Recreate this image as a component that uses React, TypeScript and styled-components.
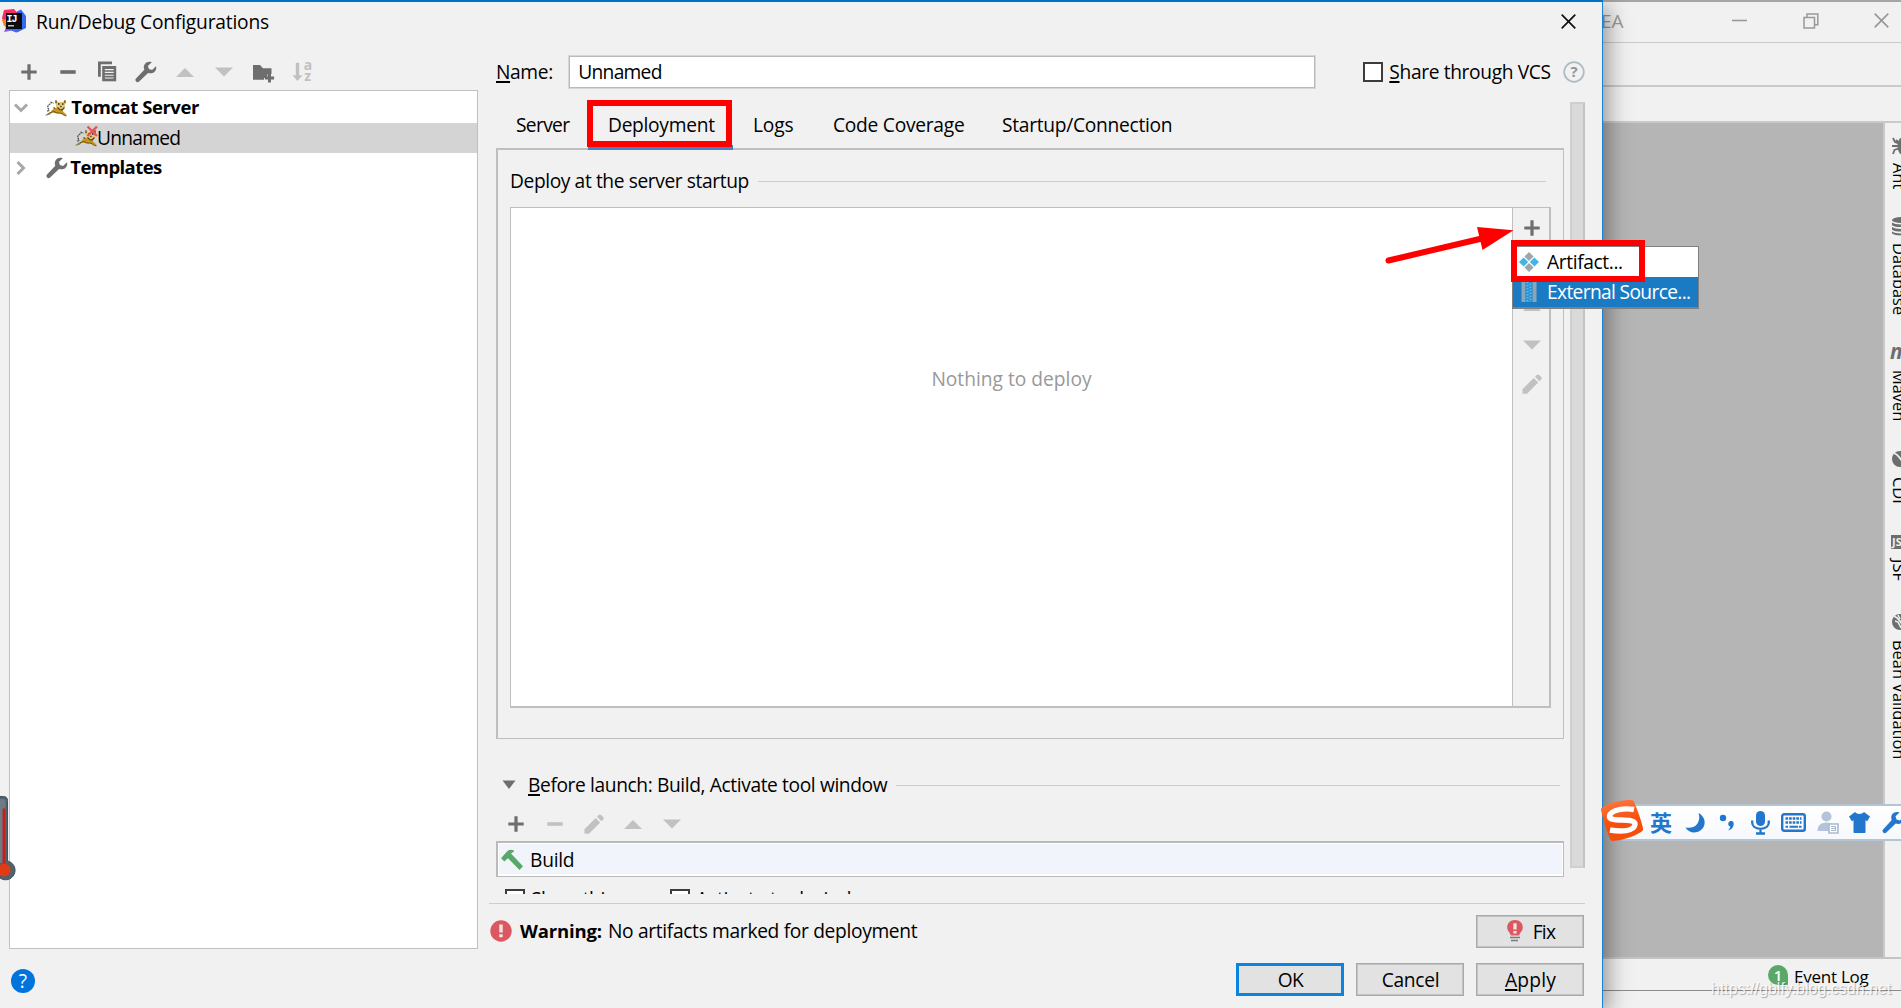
import React from "react";
import styled, { createGlobalStyle, css } from "styled-components";

const GlobalStyle = createGlobalStyle`
  html, body { margin: 0; padding: 0; overflow: hidden; }
  *, *::before, *::after { box-sizing: border-box; }
  svg { display: block; flex: none; overflow: visible; }
  body { font-family: "Open Sans", "Noto Sans", sans-serif; font-size: 19.2px; color: #000; }
`;

const line = "#c0c0c0";
const iconGrey = "#6e6e6e";
const iconOff = "#c1c1c1";

/* ---------- text ---------- */

const Label = styled.span<{ $ls?: number; $bold?: boolean; $color?: string; $up?: number }>`
  flex: none;
  white-space: nowrap;
  line-height: 24px;
  font-size: ${(p) => (p.$bold ? 18.5 : 19.2)}px;
  font-weight: ${(p) => (p.$bold ? 700 : 400)};
  letter-spacing: ${(p) => p.$ls ?? 0}px;
  color: ${(p) => p.$color ?? "#000"};
  padding-bottom: ${(p) => p.$up ?? 0}px;
`;

const Mnemonic = styled.span`
  text-decoration: underline;
  text-decoration-thickness: 2px;
  text-underline-offset: 2px;
  text-decoration-skip-ink: none;
`;

/* ---------- frame ---------- */

const Desktop = styled.div`
  position: relative;
  display: flex;
  width: 1901px;
  height: 1008px;
  overflow: hidden;
  background: #f1f1f1;
`;

const Dialog = styled.section`
  position: relative;
  z-index: 1;
  flex: none;
  display: flex;
  flex-direction: column;
  width: 1603px;
  height: 1008px;
  background: #f1f1f1;
  border-top: 2px solid #0072c9;
  border-right: 1px solid #1a80d2;
  box-shadow: 4px 6px 22px rgba(0, 0, 0, 0.42);
`;

const TitleBar = styled.header`
  display: flex;
  align-items: center;
  height: 40px;
  padding: 0 26px 2px 2px;
`;

const TitleText = styled.div`
  flex: 1;
  padding-left: 10px;
`;

const Body = styled.div`
  display: flex;
  height: 907px;
`;

/* ---------- left side ---------- */

const Sidebar = styled.aside`
  display: flex;
  flex-direction: column;
  width: 478px;
  padding-left: 9px;
`;

const ToolStrip = styled.div<{ $h: number; $top: number; $left: number }>`
  display: flex;
  flex: none;
  align-items: center;
  gap: 15px;
  height: ${(p) => p.$h}px;
  padding: ${(p) => `${p.$top}px 0 0 ${p.$left}px`};
`;

const Tree = styled.div`
  flex: 1;
  background: #fff;
  border: 1px solid ${line};
  padding-top: 2px;
`;

const TreeRow = styled.div<{ $selected?: boolean; $indent: number }>`
  display: flex;
  align-items: center;
  height: 30px;
  padding-left: ${(p) => p.$indent}px;
  background: ${(p) => (p.$selected ? "#d4d4d4" : "transparent")};
`;

const Twisty = styled.span`
  display: flex;
  width: 32px;
`;

/* ---------- right side ---------- */

const Editor = styled.main`
  display: flex;
  flex-direction: column;
  width: 1096px;
  margin-left: 11px;
`;

const NameRow = styled.div`
  display: flex;
  flex: none;
  align-items: center;
  height: 60px;
  padding-left: 7px;
`;

const TextField = styled.div`
  display: flex;
  align-items: center;
  width: 748px;
  height: 34px;
  margin: 0 47px 0 15.5px;
  padding: 0 0 1px 9px;
  background: #fff;
  border: 1px solid #d6d6d6;
  box-shadow: inset 0 0 0 1px #bababa;
`;

const CheckBox = styled.span`
  flex: none;
  width: 20px;
  height: 20px;
  margin-right: 6px;
  background: #fff;
  border: 2px solid #3c3c3c;
`;

const ScrollPane = styled.div`
  display: flex;
  flex: none;
  height: 792px;
  padding-left: 7px;
  overflow: hidden;
`;

const ScrollContent = styled.div`
  width: 1068px;
`;

const ScrollThumb = styled.div`
  width: 15px;
  height: 766px;
  margin-left: 6px;
  background: #d9d9d9;
  border: 2px solid #cfcfcf;
  border-right-color: #c4c4c4;
`;

const TabBar = styled.nav`
  display: flex;
  height: 46px;
`;

const Tab = styled.div<{ $w: number; $active?: boolean }>`
  position: relative;
  display: flex;
  align-items: center;
  width: ${(p) => p.$w}px;
  padding: 0 0 1px 20px;
  ${(p) =>
    p.$active &&
    css`
      &::after {
        content: "";
        position: absolute;
        left: 0;
        right: 0;
        bottom: -2px;
        height: 5px;
        background: #4083c9;
      }
    `}
`;

const TabPanel = styled.div`
  height: 591px;
  padding: 5px 12px 0;
  border: solid #bfbfbf;
  border-width: 2px 1px 1px 2px;
`;

const GroupTitle = styled.div`
  display: flex;
  align-items: center;
  height: 52px;
  padding: 0 5px 0 0;
`;

const Rule = styled.i`
  flex: 1;
  height: 1px;
  margin-left: 9px;
  background: #cdcdcd;
`;

const DeployList = styled.div`
  display: flex;
  width: 1041px;
  height: 501px;
  border: solid #bfbfbf;
  border-width: 1px 2px 2px 1px;
`;

const EmptyArea = styled.div`
  flex: 1;
  padding-top: 157px;
  text-align: center;
  background: #fff;
`;

const SideTools = styled.div`
  display: flex;
  flex-direction: column;
  align-items: center;
  gap: 15px;
  width: 37px;
  padding: 8px 0 0 1px;
  border-left: 1px solid #bfbfbf;
`;

const LaunchTitle = styled.div`
  display: flex;
  align-items: center;
  height: 63px;
  padding: 29px 4px 0 6px;
`;

const TaskList = styled.div`
  height: 36px;
  background: #fff;
  border: solid #bababa;
  border-width: 2px 1px 1px 2px;
  padding: 1px 1px 2px;
`;

const TaskRow = styled.div`
  display: flex;
  align-items: center;
  gap: 6px;
  height: 30px;
  padding: 1px 0 0 1px;
  background: #f1f5fb;
`;

const OptionRow = styled.div`
  display: flex;
  padding: 12px 0 0 9px;
  height: 40px;
`;

const Option = styled.div`
  display: flex;
  align-items: center;
  height: 20px;
  width: 165px;
`;

const WarningRow = styled.div`
  display: flex;
  align-items: center;
  height: 46px;
  margin-top: 9px;
  padding: 10px 1px 0 1px;
  border-top: 1px solid #cdcdcd;
`;

const WarningText = styled.div`
  display: flex;
  flex: 1;
  gap: 6px;
  padding: 0 0 1px 8px;
`;

const Button = styled.button<{ $primary?: boolean }>`
  display: flex;
  flex: none;
  align-items: center;
  justify-content: center;
  gap: 9px;
  width: 108px;
  height: 33px;
  padding: 0 0 0 1px;
  font-family: inherit;
  background: #e2e2e2;
  border: ${(p) => (p.$primary ? "3px solid #0a84e0" : "1px solid #a9a9a9")};
  box-shadow: ${(p) => (p.$primary ? "none" : "inset 0 0 0 1px #c2c2c2")};
`;

const Footer = styled.footer`
  display: flex;
  align-items: center;
  gap: 12px;
  height: 59px;
  padding: 2px 18px 0 11px;
`;

const HelpButton = styled.span`
  display: flex;
  align-items: center;
  justify-content: center;
  width: 24px;
  height: 24px;
  margin: 2px auto 0 0;
  border-radius: 50%;
  background: #0074dd;
`;

/* ---------- IDE window behind ---------- */

const Ide = styled.section`
  display: flex;
  flex: 1;
  flex-direction: column;
  border-top: 2px solid #a5a5a5;
`;

const IdeTitle = styled.div`
  display: flex;
  align-items: center;
  height: 41px;
  overflow: hidden;
  border-bottom: 1px solid #c9c9c9;
`;

const AppName = styled.span`
  width: 129px;
  margin-left: -2px;
  padding-bottom: 3px;
  font-size: 19px;
  color: #9a9a9a;
`;

const WindowButtons = styled.div`
  display: flex;
  justify-content: space-between;
  width: 157px;
  padding-bottom: 2px;
  margin-left: 2px;
`;

const IdeBar = styled.div<{ $h: number }>`
  height: ${(p) => p.$h}px;
  border-bottom: 2px solid #c9c9c9;
`;

const IdeMain = styled.div`
  display: flex;
  height: 836px;
  border-bottom: 2px solid #c4c4c4;
`;

const Canvas = styled.div`
  width: 280px;
  background: #b5b5b5;
`;

const Rail = styled.div`
  width: 18px;
  padding: 12.5px 0 0 0;
  border-left: 2px solid #c9c9c9;
  overflow: hidden;
`;

const RailItem = styled.div<{ $h: number; $gap: number }>`
  display: flex;
  flex-direction: column;
  gap: ${(p) => p.$gap}px;
  width: 30px;
  height: ${(p) => p.$h}px;
  padding-left: 2px;
`;

const RailIcon = styled.span`
  display: flex;
  align-items: center;
  height: 20px;
  padding-left: 5px;
`;

const RailText = styled.span`
  writing-mode: vertical-rl;
  width: 24px;
  line-height: 24px;
  font-size: 16.4px;
  white-space: nowrap;
`;

const MavenMark = styled.b`
  margin-left: -2px;
  font-size: 21px;
  line-height: 20px;
  font-style: italic;
  color: ${iconGrey};
  padding-bottom: 4px;
`;

const JsMark = styled.b`
  width: 22px;
  height: 14px;
  margin-left: -1px;
  padding-left: 1px;
  font-size: 11px;
  line-height: 14px;
  color: #f1f1f1;
  background: ${iconGrey};
`;

const StatusBar = styled.div`
  display: flex;
  align-items: center;
  gap: 6px;
  height: 32px;
  padding-left: 165px;
  border-bottom: 1px solid #8c8c8c;
`;

const EventLabel = styled.span`
  font-size: 17px;
  letter-spacing: -0.25px;
  padding-top: 3px;
  white-space: nowrap;
`;

const Badge = styled.span`
  display: flex;
  align-items: center;
  justify-content: center;
  width: 20px;
  height: 20px;
  margin-top: 1px;
  font-size: 15px;
  font-weight: 600;
  line-height: 20px;
  color: #fff;
  background: #59a869;
  border-radius: 10px 10px 1px 10px;
`;

/* ---------- floating layers ---------- */

const PopupMenu = styled.div`
  position: absolute;
  z-index: 2;
  left: 1512px;
  top: 246px;
  width: 187px;
  background: #fff;
  border: 1px solid #808080;
  border-bottom-width: 2px;
`;

const MenuItem = styled.div<{ $selected?: boolean }>`
  display: flex;
  align-items: center;
  gap: 8px;
  height: 30px;
  padding-left: 6px;
  color: ${(p) => (p.$selected ? "#fff" : "#000")};
  background: ${(p) => (p.$selected ? "#1a7bc4" : "#fff")};
`;

const Highlight = styled.div<{ $x: number; $y: number; $w: number; $h: number }>`
  position: absolute;
  z-index: 3;
  left: ${(p) => p.$x}px;
  top: ${(p) => p.$y}px;
  width: ${(p) => p.$w}px;
  height: ${(p) => p.$h}px;
  border: 6px solid #fe0000;
`;

const Arrow = styled.svg`
  position: absolute;
  z-index: 3;
  left: 1380px;
  top: 220px;
`;

const Thermometer = styled.svg`
  position: absolute;
  z-index: 3;
  left: 0;
  top: 794px;
`;

const ImeBar = styled.div`
  position: absolute;
  z-index: 3;
  left: 1600px;
  top: 804px;
  width: 320px;
  height: 37px;
  padding-left: 50px;
  display: flex;
  align-items: center;
`;

const ImeBack = styled.div`
  position: absolute;
  left: 22px;
  right: 0;
  top: 0;
  bottom: 0;
  background: linear-gradient(#fff, #f6f8fc);
  border: solid #b3c4d4;
  border-width: 2px 0;
`;

const ImeLogo = styled.svg`
  position: absolute;
  left: 0;
  top: -5px;
`;

const ImeSlot = styled.span<{ $w: number }>`
  position: relative;
  display: flex;
  flex: none;
  width: ${(p) => p.$w}px;
`;

const ImeMode = styled.span`
  font-family: "Noto Sans CJK SC", sans-serif;
  font-size: 22px;
  font-weight: 700;
  line-height: 30px;
  padding-bottom: 3px;
  color: #2277cc;
`;

const Watermark = styled.span`
  position: absolute;
  z-index: 4;
  left: 1711px;
  top: 979px;
  font-family: "Liberation Sans", sans-serif;
  font-size: 16px;
  line-height: 20px;
  color: rgba(255, 255, 255, 0.85);
  text-shadow: 1px 1px 1px rgba(0, 0, 0, 0.3);
`;

/* ---------- icons ---------- */

const Plus = () => (
  <svg width="24" height="24">
    <path d="M12 4.3v15.4M4.3 12h15.4" stroke={iconGrey} strokeWidth="3.2" fill="none" />
  </svg>
);

const Minus = ({ color = iconGrey }: { color?: string }) => (
  <svg width="24" height="24">
    <path d="M4.3 12h15.4" stroke={color} strokeWidth="3.6" fill="none" />
  </svg>
);

const Up = () => (
  <svg width="24" height="24">
    <path d="M3 17L12 8l9 9z" fill={iconOff} />
  </svg>
);

const Down = () => (
  <svg width="24" height="24">
    <path d="M3 7.5h18l-9 9z" fill={iconOff} />
  </svg>
);

const Copy = () => (
  <svg width="24" height="24">
    <path d="M3 1.5h14v2.7H5.8v12.6H3z" fill={iconGrey} />
    <path d="M7.2 6h14v15.3h-14z" fill={iconGrey} />
    <path d="M9.8 9.6h8.8M9.8 12.4h8.8M9.8 15.2h8.8M9.8 18h8.8" stroke="#f1f1f1" strokeWidth="1.1" />
  </svg>
);

const Wrench = ({ color = iconGrey, size = 24 }: { color?: string; size?: number }) => (
  <svg width={size} height={size} viewBox="0 0 24 24">
    <path
      d="M22 6.300l-3.900 3.700-3.200-.9-1-3.100 3.900-3.700c-2.700-1-5.400-.3-6.900 1.600-1.300 1.700-1.400 3.700-.6 5.800L2 18.600c-.9 1-.7 2.200.1 3 .9.9 2 .9 3 0l9-8.700c2.100.8 4.400.5 6.200-1 1.800-1.500 2.400-3.500 1.700-5.600z"
      fill={color}
    />
  </svg>
);

const FolderAdd = () => (
  <svg width="24" height="24">
    <path d="M2 5h7l3 3.200h8.500v5.800h-4v4H13v1.800H2z" fill={iconGrey} />
    <path d="M18.500 13.300v9.200M13.900 17.900h9.200" stroke={iconGrey} strokeWidth="3" />
  </svg>
);

const SortText = styled.text`
  font-family: "Open Sans", sans-serif;
  font-size: 14px;
  font-weight: 700;
  fill: ${iconOff};
`;

const Sort = () => (
  <svg width="24" height="24">
    <path d="M5.800 2.800h3.400v12.500h3.300L7.500 21 2.500 15.300h3.300z" fill={iconOff} />
    <SortText x="13.700" y="10">a</SortText>
    <SortText x="14.200" y="20.500">z</SortText>
  </svg>
);

const Pencil = () => (
  <svg width="24" height="24">
    <path d="M2.500 17.200L13.700 6l4.500 4.500L7 21.700H2.500z" fill={iconOff} />
    <path d="M15 4.700l1.700-1.700c.8-.8 1.600-.8 2.400 0l2.100 2.100c.8.8.8 1.600 0 2.400l-1.700 1.700z" fill={iconOff} />
  </svg>
);

const Cat = ({ broken = false }: { broken?: boolean }) => (
  <svg width="22" height="18" viewBox="0 0 22 18">
    <path d="M5.500 12.500L9 9.500l4-1.500 4 2.500 1.500 2.500 3 2.500-1 1.200-5-2.700-5 .3-2.500-.8z" fill="#c9971c" />
    <path d="M0 16.500l4-3 3-.5-2 2.500-3.500 1z" fill="#8c7a4a" />
    <path d="M5 13.800l4-1.300 3 1.500 4 .2 3.500 2.300 2 .3" stroke="#6b5410" strokeWidth="1" fill="none" />
    <path d="M4 10.500C1.500 8.500 3 5 6.500 4.500M5.500 3l3 1.200M2 12l3-.5M8.500 8.500l1.500 1" stroke="#3a3a3a" strokeWidth="1.100" fill="none" strokeDasharray="2 0.700" />
    <path d="M10.500 1l2.500 2h4.500L20.300.8l-.3 7-3 3.400-3.500-.5-2.500-3z" fill="#e9c873" />
    <path d="M11 1.200v3M20 1.200v3M12.500 8.500l2 2 2.500.5 2.500-2.500" stroke="#4a3c14" strokeWidth="1.200" fill="none" />
    <path d="M13 5h1.500M17 5h1.500M15.300 7.500h1.200" stroke="#222" strokeWidth="1.500" />
    {broken && <path d="M12.500-2.500l9.500 9.500M22-2.500L12.500 7" stroke="#e0565f" strokeWidth="2.400" />}
  </svg>
);

const LogoText = styled.text`
  font-family: "Liberation Mono", monospace;
  font-size: 10px;
  font-weight: 700;
  fill: #fff;
`;

const IdeaLogo = () => (
  <svg width="24" height="24" viewBox="0 0 24 24">
    <defs>
      <linearGradient id="ij" x1="0" x2="1">
        <stop offset="0" stopColor="#b14be8" />
        <stop offset="0.600" stopColor="#3b6cf2" />
      </linearGradient>
    </defs>
    <path d="M14 3l5-2.500L24 7v12l-9 4.500-6-2z" fill="#3668ec" />
    <path d="M2 1l10-1 4 5-6 14H4L0 9z" fill="#fb2b63" />
    <path d="M0 11l5-1v8l-3-1z" fill="#fc801d" />
    <path d="M2 23l3-7 12 3-3 4.500-4-2z" fill="url(#ij)" />
    <path d="M4 4h16v16H4z" fill="#0c0c10" />
    <LogoText x="4.500" y="12.500" textLength="11">IJ</LogoText>
    <path d="M6 16.800h6" stroke="#ddd" strokeWidth="1.300" />
  </svg>
);

const Cross = ({ color, size }: { color: string; size: number }) => (
  <svg width={size} height={size} viewBox="0 0 15 15">
    <path d="M.7.700l13.600 13.600M14.300.7L.7 14.300" stroke={color} strokeWidth="1.700" />
  </svg>
);

const HintSvg = styled.svg`
  margin-left: 12px;
`;

const HintText = styled.text`
  font-family: "Open Sans", sans-serif;
  font-size: 15px;
  font-weight: 700;
  fill: #8b979f;
`;

const HintIcon = () => (
  <HintSvg width="22" height="22">
    <circle cx="11" cy="11" r="9.800" fill="none" stroke="#aebac2" strokeWidth="1.700" />
    <HintText x="11" y="16.300" textAnchor="middle">?</HintText>
  </HintSvg>
);

const ErrorIcon = () => (
  <svg width="22" height="22">
    <circle cx="11" cy="10" r="10.700" fill="#db5860" />
    <path d="M9.300 3.500h3.400v8H9.300zM9.300 13.200h3.400v3H9.300z" fill="#f4e4e5" />
  </svg>
);

const BulbIcon = () => (
  <svg width="18" height="24">
    <path d="M9 0c4.800 0 7.800 3.300 7.800 7.300 0 3.800-2.800 5-3.600 8.200H4.800C4 12.300 1.200 11.100 1.200 7.300 1.200 3.300 4.200 0 9 0z" fill="#db5860" />
    <path d="M7.400 3.300h3.200v6.200H7.400zM7.400 11h3.200v2.500H7.400z" fill="#f4e4e5" />
    <path d="M4 17.600h10M5 20.600h7" stroke="#7a7a7a" strokeWidth="1.500" />
  </svg>
);

const Hammer = () => (
  <svg width="24" height="24">
    <path d="M1 10.200L7.500 3c1.500-1.600 4.500-1.300 6.500-.5v1l-3 2 12 12.800-3.500 3.700L8 10.300l-3.700 3.200z" fill="#59a869" />
  </svg>
);

const ArtifactIcon = () => (
  <svg width="20" height="20">
    <path d="M10 0l4.600 4.600L10 9 5.400 4.600z" fill="#9aa7b0" />
    <path d="M10 11l4.600 4.400L10 20l-4.600-4.600z" fill="#9aa7b0" />
    <path d="M4.600 5.400L9.200 10l-4.600 4.600L0 10z" fill="#40b6e0" />
    <path d="M15.400 5.400L20 10l-4.600 4.600L10.800 10z" fill="#40b6e0" />
  </svg>
);

const ArchiveIcon = () => (
  <svg width="20" height="20">
    <path d="M2.500 0h4v20h-4zM13.500 0h4v20h-4z" fill="#8aa5b8" />
    <path d="M7 0h6v20H7z" fill="#2a8fd0" />
    <path d="M8.500 0v20M11.500 1.500v18.500" stroke="#4fc0ee" strokeWidth="2" strokeDasharray="1.500 1.500" />
  </svg>
);

const AntIcon = () => (
  <svg width="20" height="18">
    <ellipse cx="10" cy="9" rx="4.500" ry="8.500" fill={iconGrey} />
    <path d="M1 1l2 4 5 2M0 9h7M1 17l1.500-4L8 11M4 3l3 3" stroke={iconGrey} strokeWidth="1.800" fill="none" />
  </svg>
);

const DbIcon = () => (
  <svg width="18" height="19">
    <ellipse cx="9" cy="3" rx="9" ry="3" fill={iconGrey} />
    <path d="M0 5.500c3 2.500 15 2.500 18 0v2.700c-3 2.500-15 2.500-18 0zM0 10c3 2.500 15 2.500 18 0v2.700c-3 2.500-15 2.500-18 0zM0 14.500c3 2.500 15 2.500 18 0v2c-3 2.500-15 2.500-18 0z" fill={iconGrey} />
  </svg>
);

const BeanIcon = ({ cracked = false }: { cracked?: boolean }) => (
  <svg width="16" height="16">
    <circle cx="8" cy="8" r="8" fill={iconGrey} />
    <path d="M2 2c4 1.500 5 4 6.500 6s4 4 6 4.500" stroke="#f1f1f1" strokeWidth="1.800" fill="none" />
    {cracked && <path d="M3 7l3 1 3 6M6 1l2 4" stroke="#f1f1f1" strokeWidth="1.500" fill="none" />}
  </svg>
);

const Restore = () => (
  <svg width="16" height="16">
    <path d="M1 4.500h10.500V15H1zM4 4.500V1h10.800v10.800h-3.300" stroke="#999" strokeWidth="1.500" fill="none" />
  </svg>
);

const ime = "#2277cc";

/* ---------- data ---------- */

const tabs = [
  { name: "Server", w: 92, ls: -0.66 },
  { name: "Deployment", w: 145, ls: -0.29, active: true },
  { name: "Logs", w: 80, ls: -0.2 },
  { name: "Code Coverage", w: 169, ls: -0.26 },
  { name: "Startup/Connection", w: 210, ls: -0.28 },
];

const rail = [
  { name: "Ant", h: 80.5, gap: 7, icon: <AntIcon /> },
  { name: "Database", h: 126.5, gap: 7, icon: <DbIcon /> },
  { name: "Maven", h: 106.5, gap: 7.5, icon: <MavenMark>m</MavenMark> },
  { name: "CDI", h: 83, gap: 7.5, icon: <BeanIcon /> },
  { name: "JSF", h: 80, gap: 6.5, icon: <JsMark>JS</JsMark> },
  { name: "Bean Validation", h: 150, gap: 7.5, icon: <BeanIcon cracked /> },
];

export default function App() {
  return (
    <Desktop>
      <GlobalStyle />
      <Dialog>
        <TitleBar>
          <IdeaLogo />
          <TitleText>
            <Label $ls={-0.19}>Run/Debug Configurations</Label>
          </TitleText>
          <Cross color="#111" size={15} />
        </TitleBar>

        <Body>
          <Sidebar>
            <ToolStrip $h={48} $top={12} $left={8}>
              <Plus />
              <Minus />
              <Copy />
              <Wrench />
              <Up />
              <Down />
              <FolderAdd />
              <Sort />
            </ToolStrip>
            <Tree>
              <TreeRow $indent={3}>
                <Twisty>
                  <svg width="16" height="12">
                    <path d="M2 2.500l6 6 6-6" stroke="#a8a8a8" strokeWidth="3" fill="none" />
                  </svg>
                </Twisty>
                <Cat />
                <Label $bold $ls={-0.44} $up={2}>&nbsp;Tomcat Server</Label>
              </TreeRow>
              <TreeRow $selected $indent={65}>
                <Cat broken />
                <Label $ls={-0.73} $up={1}>Unnamed</Label>
              </TreeRow>
              <TreeRow $indent={3}>
                <Twisty>
                  <svg width="16" height="14">
                    <path d="M4.500 1l6 6-6 6" stroke="#a8a8a8" strokeWidth="3" fill="none" />
                  </svg>
                </Twisty>
                <Wrench size={24} />
                <Label $bold $ls={-0.57} $up={2}>&#8202;Templates</Label>
              </TreeRow>
            </Tree>
          </Sidebar>

          <Editor>
            <NameRow>
              <Label $ls={-0.38} $up={1}>
                <Mnemonic>N</Mnemonic>ame:
              </Label>
              <TextField>
                <Label $ls={-0.73}>Unnamed</Label>
              </TextField>
              <CheckBox />
              <Label $ls={-0.36} $up={1}>
                <Mnemonic>S</Mnemonic>hare through VCS
              </Label>
              <HintIcon />
            </NameRow>

            <ScrollPane>
              <ScrollContent>
                <TabBar>
                  {tabs.map((t) => (
                    <Tab key={t.name} $w={t.w} $active={t.active}>
                      <Label $ls={t.ls}>{t.name}</Label>
                    </Tab>
                  ))}
                </TabBar>
                <TabPanel>
                  <GroupTitle>
                    <Label $ls={-0.4}>Deploy at the server startup</Label>
                    <Rule />
                  </GroupTitle>
                  <DeployList>
                    <EmptyArea>
                      <Label $color="#999">Nothing to deploy</Label>
                    </EmptyArea>
                    <SideTools>
                      <Plus />
                      <Minus color={iconOff} />
                      <Up />
                      <Down />
                      <Pencil />
                    </SideTools>
                  </DeployList>
                </TabPanel>

                <LaunchTitle>
                  <svg width="26" height="10">
                    <path d="M.5.500h13l-6.500 8.500z" fill={iconGrey} />
                  </svg>
                  <Label $ls={-0.39}>
                    <Mnemonic>B</Mnemonic>efore launch: Build, Activate tool window
                  </Label>
                  <Rule />
                </LaunchTitle>
                <ToolStrip $h={39} $top={5} $left={8}>
                  <Plus />
                  <Minus color={iconOff} />
                  <Pencil />
                  <Up />
                  <Down />
                </ToolStrip>
                <TaskList>
                  <TaskRow>
                    <Hammer />
                    <Label $ls={-0.25}>Build</Label>
                  </TaskRow>
                </TaskList>
                <OptionRow>
                  <Option>
                    <CheckBox />
                    <Label $ls={-0.4}>Show this page</Label>
                  </Option>
                  <Option>
                    <CheckBox />
                    <Label $ls={-0.2}>Activate tool window</Label>
                  </Option>
                </OptionRow>
              </ScrollContent>
              <ScrollThumb />
            </ScrollPane>

            <WarningRow>
              <ErrorIcon />
              <WarningText>
                <Label $bold $ls={-0.15}>Warning:</Label>
                <Label $ls={-0.33}>No artifacts marked for deployment</Label>
              </WarningText>
              <Button>
                <BulbIcon />
                <Label $ls={-0.7}>Fix</Label>
              </Button>
            </WarningRow>
          </Editor>
        </Body>

        <Footer>
          <HelpButton>
            <Label $color="#fff">?</Label>
          </HelpButton>
          <Button $primary>
            <Label $ls={-0.5}>OK</Label>
          </Button>
          <Button>
            <Label $ls={-0.28}>Cancel</Label>
          </Button>
          <Button>
            <Label $ls={0.2}>
              <Mnemonic>A</Mnemonic>pply
            </Label>
          </Button>
        </Footer>
      </Dialog>

      <Ide>
        <IdeTitle>
          <AppName>EA</AppName>
          <WindowButtons>
            <svg width="15" height="16">
              <path d="M0 7.500h15" stroke="#999" strokeWidth="1.600" />
            </svg>
            <Restore />
            <Cross color="#999" size={15} />
          </WindowButtons>
        </IdeTitle>
        <IdeBar $h={44} />
        <IdeBar $h={36} />
        <IdeMain>
          <Canvas />
          <Rail>
            {rail.map((r) => (
              <RailItem key={r.name} $h={r.h} $gap={r.gap}>
                <RailIcon>{r.icon}</RailIcon>
                <RailText>{r.name}</RailText>
              </RailItem>
            ))}
          </Rail>
        </IdeMain>
        <StatusBar>
          <Badge>1</Badge>
          <EventLabel>Event Log</EventLabel>
        </StatusBar>
      </Ide>

      <PopupMenu>
        <MenuItem>
          <ArtifactIcon />
          <Label $ls={-0.38}>Artifact...</Label>
        </MenuItem>
        <MenuItem $selected>
          <ArchiveIcon />
          <Label $ls={-0.65} $color="#fff">External Source...</Label>
        </MenuItem>
      </PopupMenu>
      <Highlight $x={587} $y={100} $w={145} $h={47} />
      <Highlight $x={1511} $y={240} $w={134} $h={42} />
      <Arrow width="140" height="50">
        <path d="M8.500 40.500L104 18" stroke="#fe0000" strokeWidth="6" strokeLinecap="round" />
        <path d="M97 7l36.500 3.300L102.500 30z" fill="#fe0000" />
      </Arrow>

      <Thermometer width="16" height="90">
        <path d="M0 2.500h3.500c2.500 0 4 1.500 4 4V67a9.500 9.500 0 1 1-7.500 17z" fill="#52626d" stroke="#44525c" strokeWidth="1" />
        <path d="M0 5h3c1.500 0 2.500 1 2.500 2.500V69H0z" fill="#6c7c86" />
        <path d="M2.500 14.500h3V72h-3z" fill="#c4201c" />
        <circle cx="4" cy="76" r="6.500" fill="#e23a14" />
      </Thermometer>

      <ImeBar>
        <ImeBack />
        <ImeLogo width="44" height="44" viewBox="0 0 44 44">
          <defs>
            <linearGradient id="sg" x1="0" y1="0" x2="0.200" y2="1">
              <stop offset="0" stopColor="#ff7a45" />
              <stop offset="0.600" stopColor="#f4500c" />
            </linearGradient>
          </defs>
          <path d="M3 8C10 3 22 1 31 1c2 0 3 1 3.500 3C38 12 41 21 43 29c.4 2-.4 3-2 4-8 5-18 8-28 9-2 0-3-1-3.500-3C6 30 3 20 1 11c-.2-1.500.5-2.300 2-3z" fill="url(#sg)" />
          <path d="M34 10.500C26 9 11 10 9.500 17 8.500 24.500 36 17.500 35 25.500 34 32.500 21 33 10 31" stroke="#fff" strokeWidth="5.400" fill="none" />
        </ImeLogo>
        <ImeSlot $w={35}>
          <ImeMode>英</ImeMode>
        </ImeSlot>
        <ImeSlot $w={34}>
          <svg width="21" height="22">
            <path d="M13.500 1c5 2.500 7.500 8 5.500 13-3 7.500-14 9-18.500 1.500 5 1 9.500 0 12-4 2-3.300 2.300-7 1-10.500z" fill={ime} />
          </svg>
        </ImeSlot>
        <ImeSlot $w={32}>
          <svg width="18" height="20">
            <circle cx="4" cy="5" r="3.200" fill={ime} />
            <path d="M10.500 8.500c3-1.500 5 .5 4 4-.7 2.500-2.500 4.300-5.500 5 1.300-1.300 2.300-2.500 2.300-4-2.300-.5-2.800-3.500-.8-5z" fill={ime} />
          </svg>
        </ImeSlot>
        <ImeSlot $w={30}>
          <svg width="19" height="24">
            <rect x="5" y="0" width="9" height="15" rx="4.500" fill={ime} />
            <path d="M1.200 9.500v2c0 3.500 3 6.300 8.300 6.300s8.300-2.800 8.300-6.300v-2M9.500 18v4M5 22.500h9" stroke={ime} strokeWidth="2.300" fill="none" />
          </svg>
        </ImeSlot>
        <ImeSlot $w={36}>
          <svg width="25" height="19">
            <rect x="1.200" y="1.200" width="22.600" height="16.600" rx="2" fill="none" stroke={ime} strokeWidth="2.400" />
            <path d="M4.500 5.500h16M4.500 9.500h16" stroke={ime} strokeWidth="2.400" strokeDasharray="2.600 1" />
            <path d="M4.500 13.700h2.500M8.500 13.700h8.500M18 13.700h2.500" stroke={ime} strokeWidth="2" />
          </svg>
        </ImeSlot>
        <ImeSlot $w={32}>
          <svg width="22" height="24">
            <circle cx="9.500" cy="5.500" r="5" fill="#b4c3d9" />
            <path d="M.5 20c0-5 3-8.500 9-8.500s9 3.500 9 8.500z" fill="#b4c3d9" />
            <path d="M12 13h9v9h-9z" fill="#fff" stroke="#a9bad0" strokeWidth="1.600" />
            <path d="M14 15.500h4.500v4H14M14 17.500h4" stroke="#a9bad0" strokeWidth="1.200" fill="none" />
          </svg>
        </ImeSlot>
        <ImeSlot $w={32}>
          <svg width="21" height="21">
            <path d="M6 0c2 2.500 7 2.500 9 0l6 4.500-2.800 4.700-1.700-1V20c0 .6-.4 1-1 1h-10c-.6 0-1-.4-1-1V8.200l-1.700 1L0 4.500z" fill={ime} />
          </svg>
        </ImeSlot>
        <ImeSlot $w={25}>
          <Wrench color={ime} size={25} />
        </ImeSlot>
      </ImeBar>

      <Watermark>https://gblfy.blog.csdn.net</Watermark>
    </Desktop>
  );
}
